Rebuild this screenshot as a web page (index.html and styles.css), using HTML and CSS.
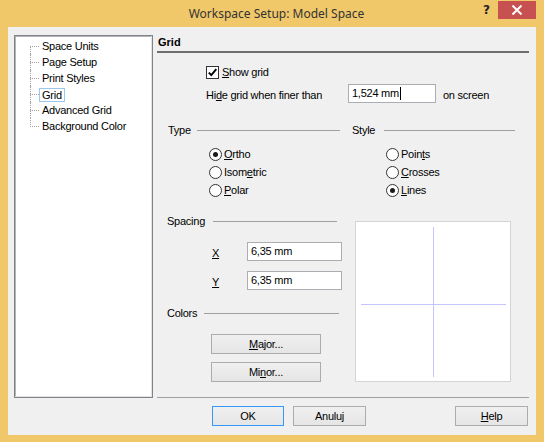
FILE: index.html
```html
<!DOCTYPE html>
<html>
<head>
<meta charset="utf-8">
<link rel="stylesheet" href="styles.css">
</head>
<body>
<div class="window">
  <div class="titlebar">
    <div class="title">Workspace Setup: Model Space</div>
    <div class="help">?</div>
    <div class="close">
      <svg width="12" height="10" viewBox="0 0 12 10"><path d="M1.5 0.5 L10.5 9.5 M10.5 0.5 L1.5 9.5" stroke="#fff" stroke-width="2"/></svg>
    </div>
  </div>
  <div class="client">
    <div class="tree">
      <ul class="tree-list">
        <li>Space Units</li>
        <li>Page Setup</li>
        <li>Print Styles</li>
        <li><span class="focus">Grid</span></li>
        <li>Advanced Grid</li>
        <li>Background Color</li>
      </ul>
    </div>
    <div class="panel">
      <div class="heading">Grid</div>

      <div class="check-row">
        <span class="checkbox"><svg width="11" height="11" viewBox="0 0 11 11"><path d="M1.8 5.6 L4.3 8.2 L9.3 2.2" fill="none" stroke="#000" stroke-width="1.9"/></svg></span>
        <span><u>S</u>how grid</span>
      </div>

      <div class="hide-row">
        <span class="hide-label">Hi<u>d</u>e grid when finer than</span>
        <span class="textbox wide">1,524 mm<span class="caret"></span></span>
        <span class="suffix">on screen</span>
      </div>

      <div class="two-col headers">
        <div class="group-head type-head"><span>Type</span><span class="rule"></span></div>
        <div class="group-head style-head"><span>Style</span><span class="rule"></span></div>
      </div>

      <div class="two-col radios">
        <div class="radio-col type-col">
          <div class="radio-row"><span class="radio on"></span><span><u>O</u>rtho</span></div>
          <div class="radio-row"><span class="radio"></span><span>Isom<u>e</u>tric</span></div>
          <div class="radio-row"><span class="radio"></span><span><u>P</u>olar</span></div>
        </div>
        <div class="radio-col style-col">
          <div class="radio-row"><span class="radio"></span><span>Poin<u>t</u>s</span></div>
          <div class="radio-row"><span class="radio"></span><span><u>C</u>rosses</span></div>
          <div class="radio-row"><span class="radio on"></span><span><u>L</u>ines</span></div>
        </div>
      </div>

      <div class="lower">
        <div class="lower-left">
          <div class="group-head spacing-head"><span>Spacing</span><span class="rule"></span></div>
          <div class="coord-row first"><span class="coord-label"><u>X</u></span><span class="textbox">6,35 mm</span></div>
          <div class="coord-row"><span class="coord-label"><u>Y</u></span><span class="textbox">6,35 mm</span></div>
          <div class="group-head colors-head"><span>Colors</span><span class="rule"></span></div>
          <div class="btn color-btn first-btn"><span><u>M</u>ajor...</span></div>
          <div class="btn color-btn"><span>Mi<u>n</u>or...</span></div>
        </div>
        <div class="preview">
          <svg width="154" height="159" viewBox="0 0 154 159">
            <line x1="77.5" y1="5" x2="77.5" y2="155" stroke="#c4c4ff" stroke-width="1"/>
            <line x1="5" y1="82.5" x2="150" y2="82.5" stroke="#c4c4ff" stroke-width="1"/>
          </svg>
        </div>
      </div>

      <div class="separator"></div>

      <div class="button-row">
        <div class="btn dialog-btn default"><span>OK</span></div>
        <div class="btn dialog-btn"><span>Anuluj</span></div>
        <div class="btn dialog-btn help-btn"><span><u>H</u>elp</span></div>
      </div>
    </div>
  </div>
</div>
</body>
</html>
```
FILE: styles.css
```css
* {
  box-sizing: border-box;
}

html,
body {
  margin: 0;
  padding: 0;
}

body {
  width: 544px;
  height: 442px;
  background: #f0c86a;
  font-family: "Liberation Sans", Arial, sans-serif;
  font-size: 11px;
  letter-spacing: -0.25px;
  color: #000;
}

u {
  text-decoration: underline;
  text-underline-offset: 1px;
}

.window {
  width: 544px;
  height: 442px;
  background: #f0c86a;
  display: flex;
  flex-direction: column;
}

/* Title bar */
.titlebar {
  height: 27px;
  display: flex;
  align-items: flex-start;
}

.title {
  flex: 1;
  padding-left: 70px;
  text-align: center;
  line-height: 28px;
  font-family: "Noto Sans", sans-serif;
  font-size: 12px;
  letter-spacing: 0;
  color: #333;
}

.help {
  width: 15px;
  margin-top: 2px;
  margin-right: 0;
  font-family: "DejaVu Sans", sans-serif;
  font-weight: bold;
  font-size: 12px;
  line-height: 16px;
  color: #222;
}

.close {
  width: 38px;
  height: 18px;
  margin-top: 1px;
  margin-right: 8px;
  background: #c75050;
  display: flex;
  align-items: center;
  justify-content: center;
}

/* Client area */
.client {
  margin: 0 8px;
  height: 408px;
  background: #f0f0f0;
  display: flex;
  align-items: flex-start;
  padding: 8px 7px 0 6px;
}

/* Tree */
.tree {
  width: 139px;
  height: 363px;
  background: #fff;
  border: 1px solid #7f8389;
  box-shadow: inset -1px -1px 0 #e3e3e3, inset 1px 1px 0 #b4b4b4;
}

.tree-list {
  list-style: none;
  margin: 0;
  padding: 2px 0 0 0;
}

.tree-list li {
  position: relative;
  height: 16px;
  line-height: 16px;
  padding-left: 27px;
  white-space: nowrap;
}

.tree-list li::before {
  content: "";
  position: absolute;
  left: 15px;
  top: 8px;
  width: 9px;
  border-top: 1px dotted #a0a0a0;
}

.tree-list li::after {
  content: "";
  position: absolute;
  left: 15px;
  top: 0;
  height: 16px;
  border-left: 1px dotted #a0a0a0;
}

.tree-list li:first-child::after {
  top: 8px;
  height: 8px;
}

.tree-list li:last-child::after {
  height: 9px;
}

.focus {
  display: inline-block;
  margin-left: -3px;
  padding: 0 2px;
  line-height: 12px;
  border: 1px solid #99c9ef;
  vertical-align: middle;
  margin-top: -1px;
}

/* Right panel */
.panel {
  width: 372px;
  margin-left: 4px;
  display: flex;
  flex-direction: column;
}

.heading {
  font-weight: bold;
  letter-spacing: 0;
  height: 18px;
  padding-left: 1px;
  line-height: 14px;
  border-bottom: 2px solid #6d6d6d;
}

.check-row {
  margin-top: 11px;
  margin-left: 49px;
  height: 16px;
  display: flex;
  align-items: center;
  gap: 3px;
}

.checkbox {
  width: 13px;
  height: 13px;
  border: 1px solid #333;
  background: #fff;
  display: flex;
  align-items: center;
  justify-content: center;
}

.hide-row {
  margin-top: 4px;
  margin-left: 49px;
  height: 19px;
  display: flex;
  align-items: center;
}

.hide-label {
  width: 142px;
  padding-top: 2px;
}

.textbox {
  width: 95px;
  height: 19px;
  background: #fff;
  border: 1px solid #abadb3;
  padding-left: 3px;
  line-height: 17px;
  display: flex;
  align-items: center;
}

.textbox.wide {
  width: 88px;
}

.caret {
  display: inline-block;
  width: 1px;
  height: 13px;
  background: #000;
  margin-left: 1px;
}

.suffix {
  margin-left: 7px;
  padding-top: 2px;
}

.two-col {
  display: grid;
  grid-template-columns: 172px 163px;
  column-gap: 12px;
  margin-left: 11px;
}

.headers {
  margin-top: 20px;
}

.group-head {
  height: 14px;
  display: flex;
  align-items: center;
}

.rule {
  flex: 1;
  height: 1px;
  background: #a0a0a0;
}

.type-head .rule {
  margin-left: 6px;
}

.style-head .rule {
  margin-left: 9px;
}

.radios {
  margin-top: 8px;
}

.type-col {
  padding-left: 41px;
}

.style-col {
  padding-left: 34px;
}

.radio-row {
  height: 18px;
  display: flex;
  align-items: center;
  gap: 2px;
}

.radio {
  width: 13px;
  height: 13px;
  border: 1px solid #333;
  border-radius: 50%;
  background: #fff;
  display: flex;
  align-items: center;
  justify-content: center;
}

.radio.on::after {
  content: "";
  width: 5px;
  height: 5px;
  border-radius: 50%;
  background: #1a1a1a;
}

/* Lower area */
.lower {
  margin-top: 15px;
  margin-left: 10px;
  display: grid;
  grid-template-columns: 188px 156px;
}

.spacing-head {
  width: 170px;
}

.spacing-head .rule {
  margin-left: 8px;
}

.colors-head {
  width: 172px;
  margin-top: 16px;
}

.colors-head .rule {
  margin-left: 7px;
}

.coord-row {
  margin-top: 10px;
  height: 19px;
  display: flex;
  align-items: center;
  padding-left: 45px;
}

.coord-row.first {
  margin-top: 14px;
}

.coord-label {
  width: 35px;
  padding-top: 2px;
}

.btn {
  height: 20px;
  border: 1px solid #acacac;
  background: linear-gradient(#f0f0f0, #e5e5e5);
  display: flex;
  align-items: center;
  justify-content: center;
}

.color-btn {
  width: 110px;
  margin-left: 44px;
  margin-top: 8px;
}

.color-btn.first-btn {
  margin-top: 14px;
}

.preview {
  margin-top: 7px;
  width: 156px;
  height: 161px;
  background: #fff;
  border: 1px solid #d4d4d4;
}

.preview svg {
  display: block;
}

.separator {
  margin-top: 15px;
  height: 1px;
  background: #a0a0a0;
}

.button-row {
  margin-top: 8px;
  display: flex;
  padding-left: 55px;
  padding-right: 1px;
  gap: 9px;
}

.dialog-btn {
  width: 73px;
}

.dialog-btn.default {
  width: 72px;
  border-color: #3399ff;
}

.help-btn {
  margin-left: auto;
}
```
